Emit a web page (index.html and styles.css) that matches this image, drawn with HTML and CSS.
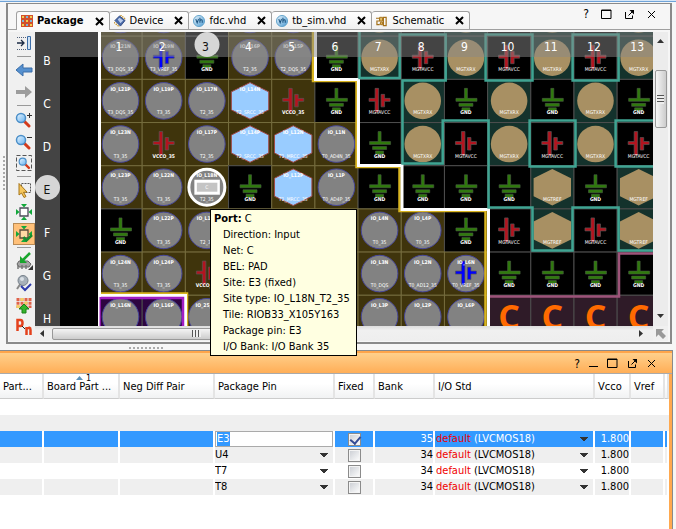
FILE: index.html
```html
<!DOCTYPE html>
<html lang="en">
<head>
<meta charset="utf-8">
<title>Package</title>
<link rel="stylesheet" href="styles.css">
</head>
<body>
<svg class="defs" aria-hidden="true">
  <defs>
    <linearGradient id="lens" x1="0" y1="0" x2="1" y2="1"><stop offset="0" stop-color="#eaf6ff"/><stop offset="1" stop-color="#62b0f0"/></linearGradient>
    <linearGradient id="ball" x1="0" y1="0" x2="1" y2="1"><stop offset="0" stop-color="#e8f4fb"/><stop offset="1" stop-color="#4d9bd3"/></linearGradient>
    <symbol id="i-mag" viewBox="0 0 18 18"><path d="M9 9l5 5" stroke="#d33a1c" stroke-width="3" stroke-linecap="round"/><circle cx="6" cy="6" r="4.500" fill="url(#lens)" stroke="#4a8ec8" stroke-width="1.500"/></symbol>
    <symbol id="i-close" viewBox="0 0 9 9"><path d="M1 1l7 7M8 1l-7 7" stroke="currentColor" stroke-width="2"/></symbol>
    <symbol id="i-thin" viewBox="0 0 9 9"><path d="M1 1l7 7M8 1l-7 7" stroke="currentColor"/></symbol>
    <symbol id="i-max" viewBox="0 0 11 11"><path d="M.5 1h9.500v8.500h-9.500zM0 1.500h10" fill="none" stroke="currentColor"/></symbol>
    <symbol id="i-pop" viewBox="0 0 11 11"><path d="M1.500 3v6.500h7v-3M4.500 6.500l4-4" fill="none" stroke="currentColor"/><path d="M5.500 1h4.500v4.500z" fill="currentColor"/></symbol>
    <symbol id="i-vh" viewBox="0 0 13 13"><circle cx="6.500" cy="6.500" r="6" fill="url(#ball)" stroke="#5c9fc9"/><path d="M3 4.500l1.500 4L6 4.500M7.500 3v5.500M7.500 6q2.500-2 2.500 .5v2" fill="none" stroke="#174f7c" stroke-width="1.100"/></symbol>
    <symbol id="i-place" viewBox="0 0 18 18"><path d="M5 5h8v8H5z" fill="#fff" stroke="#4c4c5a" stroke-width="1.300"/><path d="M6 1h6L9 4.500zM6 17h6l-3-3.500zM1 6v6l3.500-3zM17 6v6l-3.500-3z" fill="#12a83b"/></symbol>
    <symbol id="i-place-on" viewBox="0 0 18 18"><path d="M5 5h8v8H5z" fill="#ffd9a4" stroke="#5a4c3a" stroke-width="1.300"/><path d="M6 1h6L9 4.500zM6 17h6l-3-3.500zM1 6v6l3.500-3zM17 6v6l-3.500-3z" fill="#12a83b"/><path d="M8.500 12l3 3.500 5.500-5.500" fill="none" stroke="#168c2f" stroke-width="2.500"/></symbol>
  </defs>
</svg>

<main class="upper">
  <header class="tabbar">
    <nav class="tabs">
      <a class="tab active" href="#map"><svg width="12" height="12" viewBox="0 0 12 12"><path fill="#d2502b" d="M0 0h12v12H0z"/><path fill="#f4cd4d" d="M1 1h2v2H1zM9 1h2v2H9zM5 5h2v2H5zM1 9h2v2H1zM9 9h2v2H9z"/><path fill="#7db4d8" d="M5 1h2v2H5zM1 5h2v2H1zM9 5h2v2H9zM5 9h2v2H5z"/></svg><span>Package</span><svg class="x" width="9" height="9"><use href="#i-close"/></svg></a>
      <a class="tab" href="#device"><svg width="12" height="12" viewBox="0 0 13 13"><path d="M1 6l5-5 6 5-5 6z" fill="#4869a8" stroke="#2d477e"/><path d="M4 5l2-2 4 3-3 3z" fill="#b9cbe9"/><path d="M0 8l6 5M7 0l6 5" stroke="#c6952f" stroke-width="1.500" stroke-dasharray="1.500 1"/></svg><span>Device</span><svg class="x" width="9" height="9"><use href="#i-close"/></svg></a>
      <a class="tab" href="#fdc"><svg width="12" height="12"><use href="#i-vh"/></svg><span>fdc.vhd</span><svg class="x" width="9" height="9"><use href="#i-close"/></svg></a>
      <a class="tab" href="#tb"><svg width="12" height="12"><use href="#i-vh"/></svg><span>tb_sim.vhd</span><svg class="x" width="9" height="9"><use href="#i-close"/></svg></a>
      <a class="tab" href="#sch"><svg width="12" height="12" viewBox="0 0 13 12"><path d="M0 3h4v3H1v4h3M8 2h3v9H8zM4 4h4M4 9h4" fill="none" stroke="#a4711a" stroke-width="1.300"/><path d="M4 2h3v4H4zM5 7h2v3H5z" fill="#e7c36b" stroke="#a4711a"/></svg><span>Schematic</span><svg class="x" width="9" height="9"><use href="#i-close"/></svg></a>
    </nav>
    <div class="winbtns">
      <button aria-label="Help">?</button>
      <button aria-label="Maximize"><svg width="11" height="11"><use href="#i-max"/></svg></button>
      <button aria-label="Float"><svg width="11" height="11"><use href="#i-pop"/></svg></button>
      <button aria-label="Close"><svg width="9" height="9"><use href="#i-thin"/></svg></button>
    </div>
  </header>

  <section class="work">
    <div class="toolbar">
      <button aria-label="Dock"><svg width="18" height="18" viewBox="0 0 18 18"><path d="M2 3.500h10M2 15.500h10" stroke="#50607a" stroke-dasharray="1 1"/><path d="M2 9h6M6 6l3 3-3 3" fill="none" stroke="#1b2a44" stroke-width="1.300"/><path d="M12.500 2.500h3v13h-3z" fill="#cfe2f5" stroke="#3d6ea8"/></svg></button>
      <hr>
      <button aria-label="Back"><svg width="18" height="18" viewBox="0 0 18 18"><path d="M1 9l7-6v4h9v4H8v4z" fill="#5590cf" stroke="#3c6fa9"/></svg></button>
      <button aria-label="Forward"><svg width="18" height="18" viewBox="0 0 18 18"><path d="M17 9l-7-6v4H1v4h9v4z" fill="#9c9c9c"/></svg></button>
      <hr>
      <button aria-label="Zoom in"><svg width="18" height="18" viewBox="0 0 18 18"><use href="#i-mag" y="2" width="18" height="18"/><path d="M12 5.500h5M14.500 3v5" stroke="#333"/></svg></button>
      <button aria-label="Zoom out"><svg width="18" height="18" viewBox="0 0 18 18"><use href="#i-mag" y="2" width="18" height="18"/><path d="M12 5.500h5" stroke="#333"/></svg></button>
      <button aria-label="Zoom fit"><svg width="18" height="18" viewBox="0 0 18 18"><path d="M1.500 1.500h15v15h-15z" fill="none" stroke="#555" stroke-dasharray="4 2"/><use href="#i-mag" x="3" y="3" width="14" height="14"/></svg></button>
      <hr>
      <button aria-label="Select area"><svg width="18" height="18" viewBox="0 0 18 18"><path d="M6.500 2.500h9v9h-9z" fill="none" stroke="#555" stroke-dasharray="2 1"/><path d="M4 2.500l8 8.500-3.500 .3 2.500 4.200-2 1-2.500-4.500L4 14z" fill="#f5c65c" stroke="#a7761a"/></svg></button>
      <button aria-label="Place ports"><svg width="18" height="18"><use href="#i-place"/></svg></button>
      <button class="on" aria-label="Auto check"><svg width="18" height="18"><use href="#i-place-on"/></svg></button>
      <hr>
      <button aria-label="Import"><svg width="18" height="18" viewBox="0 0 18 18"><path d="M2 12l2-3h9l3 3-2 3H4z" fill="#a5a5a5" stroke="#666"/><path d="M3 13v4M7 13v4M11 13v4" stroke="#777" stroke-width="1.500"/><path d="M15 1L8 8" stroke="#18a52c" stroke-width="2.500"/><path d="M5 4v7h7z" fill="#18a52c"/><path d="M18 13v5h-5z" fill="#333"/></svg></button>
      <button aria-label="Validate"><svg width="18" height="18" viewBox="0 0 18 18"><path d="M6 9l-4 6" stroke="#888" stroke-width="2"/><circle cx="8" cy="6.500" r="5" fill="#a7b0b9" stroke="#76808a"/><circle cx="7" cy="5" r="2" fill="#d9dfe5"/><path d="M6 12l4 4 6-6" fill="none" stroke="#2d3bab" stroke-width="2"/></svg></button>
      <button aria-label="Assign pins"><svg width="18" height="18" viewBox="0 0 18 18"><path d="M3 2v10M7 2v10M11 2v10M15 2v10" stroke="#e0624a" stroke-width="3" stroke-dasharray="3 .7"/><path d="M5.500 3.500h3M9.500 7h3M1.500 10.500h3" stroke="#f3cf62" stroke-width="3"/><path d="M9 8l5 5h-3v4H7v-4H4z" fill="#35b52b" stroke="#1b7f19"/></svg></button>
      <button aria-label="Differential pairs"><svg width="18" height="18" viewBox="0 0 18 18"><path d="M2.500 13V2h3q2 0 2 3t-2 3H3M11.500 17V9M11.500 11q4-3 4 1v5" fill="none" stroke="#e3411d" stroke-width="2.500"/><path d="M7 8l3 3" stroke="#222"/></svg></button>
    </div>
    <div class="canvas">
      <svg class="map" id="map" role="img" aria-label="Package pins"></svg>
      <div class="vbar"><i class="up"></i><i class="thumb"></i><i class="down"></i></div>
      <div class="hbar"><i class="left"></i><i class="thumb"></i><i class="right"></i></div>
      <div class="corner"><svg width="10" height="10" viewBox="0 0 10 10"><path d="M0 0h8L5.500 2.500 10 7 7 10 2.500 5.500 0 8z" fill="#999"/></svg></div>
    </div>
  </section>

  <div class="tip" role="tooltip">
    <p><b>Port:</b> C</p>
    <ul>
      <li>Direction: Input</li><li>Net: C</li><li>BEL: PAD</li><li>Site: E3 (fixed)</li><li>Site type: IO_L18N_T2_35</li><li>Tile: RIOB33_X105Y163</li><li>Package pin: E3</li><li>I/O Bank: I/O Bank 35</li>
    </ul>
  </div>
</main>
<div class="splitter"></div>
<i class="side-grip"></i>

<section class="lower">
  <header class="titlebar">
    <div class="winbtns">
      <button aria-label="Help">?</button>
      <button aria-label="Minimize"><svg width="9" height="9" viewBox="0 0 9 9"><path d="M0 7.500h9" stroke="currentColor"/></svg></button>
      <button aria-label="Maximize"><svg width="11" height="11"><use href="#i-max"/></svg></button>
      <button aria-label="Float"><svg width="11" height="11"><use href="#i-pop"/></svg></button>
      <button aria-label="Close"><svg width="9" height="9"><use href="#i-thin"/></svg></button>
    </div>
  </header>
  <table class="ports">
    <colgroup><col class="w-part"><col class="w-board"><col class="w-neg"><col class="w-pin"><col class="w-fixed"><col class="w-bank"><col class="w-std"><col class="w-vcco"><col class="w-vref"><col></colgroup>
    <thead>
      <tr><th>Part...</th><th><span class="sort">1</span>Board Part ...</th><th>Neg Diff Pair</th><th>Package Pin</th><th>Fixed</th><th>Bank</th><th>I/O Std</th><th>Vcco</th><th>Vref</th><th></th></tr>
    </thead>
    <tbody>
      <tr class="blank"><td colspan="10"></td></tr>
      <tr class="blank alt"><td colspan="10"></td></tr>
      <tr class="sel"><td></td><td></td><td></td><td><input id="pin" class="pin" type="text" value="E3" aria-label="Package pin"></td><td class="c"><input type="checkbox" aria-label="Fixed" checked></td><td class="r">35</td><td><button class="std"><em>default</em> (LVCMOS18)</button></td><td class="r">1.800</td><td></td><td></td></tr>
      <tr class="alt"><td></td><td></td><td></td><td><select aria-label="Package pin"><option>U4</option></select></td><td class="c"><input type="checkbox" aria-label="Fixed"></td><td class="r">34</td><td><button class="std"><em>default</em> (LVCMOS18)</button></td><td class="r">1.800</td><td></td><td></td></tr>
      <tr><td></td><td></td><td></td><td><select aria-label="Package pin"><option>T7</option></select></td><td class="c"><input type="checkbox" aria-label="Fixed"></td><td class="r">34</td><td><button class="std"><em>default</em> (LVCMOS18)</button></td><td class="r">1.800</td><td></td><td></td></tr>
      <tr class="alt"><td></td><td></td><td></td><td><select aria-label="Package pin"><option>T8</option></select></td><td class="c"><input type="checkbox" aria-label="Fixed"></td><td class="r">34</td><td><button class="std"><em>default</em> (LVCMOS18)</button></td><td class="r">1.800</td><td></td><td></td></tr>
    </tbody>
  </table>
</section>
<script src="map.js"></script>
</body>
</html>
```

FILE: styles.css
```css
* { box-sizing: border-box; }
body {
  margin: 0;
  height: 100vh;
  display: flex;
  flex-direction: column;
  position: relative;
  overflow: hidden;
  background: #f6f6f6;
  border-top: 1px solid #d6e6f6;
  color: #000;
  font: 11px/16px "DejaVu Sans Condensed", "DejaVu Sans", sans-serif;
}
body::before { content: ""; height: 1px; background: #6fa3d8; flex: none; }
button {
  font: inherit;
  color: inherit;
  border: 0;
  padding: 0;
  background: none;
}
svg { display: block; flex: none; }
.defs { position: absolute; width: 0; height: 0; }

.upper {
  position: relative;
  flex: 1;
  min-height: 0;
  display: flex;
  flex-direction: column;
  margin: 1px 4px 0 6px;
  border: 2px solid #8a8a8a;
  border-top-width: 1px;
}
.tabbar {
  display: flex;
  justify-content: space-between;
  flex: none;
  height: 26px;
  padding: 7px 14px 0 8px;
  border-bottom: 1px solid #a0a0a0;
}
.tabs { display: flex; }
.tab {
  display: flex;
  align-items: center;
  gap: 4px;
  height: 18px;
  padding: 0 5px 0 4px;
  border: 1px solid #a0a0a0;
  border-bottom: 0;
  border-left: 0;
  border-radius: 3px 3px 0 0;
  background: linear-gradient(#fff, #f0f0f0);
  color: #000;
  text-decoration: none;
}
.tab.active {
  height: 19px;
  border-left: 1px solid #a0a0a0;
  background: #fafafa;
  font-weight: bold;
}
.tab .x { margin-left: 7px; }
.winbtns { display: flex; align-items: center; gap: 12px; font-size: 12px; }
.tabbar .winbtns { padding-bottom: 12px; }

.work { flex: 1; min-height: 0; display: flex; margin: 2px 2px 1px 1px; }
.toolbar {
  display: flex;
  flex-direction: column;
  align-items: center;
  width: 26px;
  padding-left: 4px;
  background: #f0f0f0;
}
.toolbar button {
  display: grid;
  place-items: center;
  width: 22px;
  height: 22px;
  flex: none;
}
.toolbar hr { width: 14px; margin: 2px 0; border: 0; border-top: 1px solid #999; }
.toolbar .on { border: 1px solid #b98b55; background: #ffc079; }

.canvas {
  flex: 1;
  min-width: 0;
  display: grid;
  grid-template-columns: 1fr 15px;
  grid-template-rows: 1fr 15px;
}
.map { width: 100%; height: 100%; background: #000; overflow: hidden; }
.map text { text-anchor: middle; font-family: "DejaVu Sans Condensed", "DejaVu Sans", sans-serif; }
.map .pin-label { font-size: 5px; fill: #fff; }
.map .name-label { font-size: 5px; font-weight: bold; fill: #fff; }
.map .axis { font-size: 12px; fill: #fff; }
.map .axis.hot { fill: #111; }
.map .big { font: bold 34px "Open Sans", sans-serif; fill: #ff6a00; }

.vbar, .hbar { display: flex; align-items: center; background: #ececec; }
.vbar { flex-direction: column; padding: 7px 0 8px; }
.hbar { padding: 0 10px 0 5px; background: linear-gradient(#ddd, #f0f0f0 30%, #eee); }
.vbar i, .hbar i { flex: none; }
.up, .down { width: 7px; height: 4px; background: #333; clip-path: polygon(50% 0, 100% 100%, 0 100%); }
.down { margin-top: auto; clip-path: polygon(0 0, 100% 0, 50% 100%); }
.left, .right { width: 4px; height: 7px; background: #333; clip-path: polygon(0 50%, 100% 0, 100% 100%); }
.right { margin-left: auto; clip-path: polygon(0 0, 100% 50%, 0 100%); }
.thumb { border: 1px solid #999; border-radius: 2px; }
.vbar .thumb {
  width: 12px;
  height: 58px;
  margin-top: 27px;
  background: repeating-linear-gradient(#555 0 1px, #eee 1px 3px) center / 7px 9px no-repeat, linear-gradient(90deg, #f6f6f6, #ccc);
}
.hbar .thumb {
  width: 48%;
  height: 12px;
  margin-left: 8px;
  background: repeating-linear-gradient(90deg, #555 0 1px, #eee 1px 3px) center / 9px 7px no-repeat, linear-gradient(#f4f4f4, #ccc);
}
.corner { display: grid; place-items: center; background: #f0f0f0; }

.tip {
  position: absolute;
  left: 202px;
  top: 205px;
  z-index: 2;
  padding: 1px 6px 0 3px;
  border: 1px solid #000;
  background: #ffffe1;
  white-space: nowrap;
}
.tip p, .tip ul { margin: 0; }
.tip ul { padding: 0 0 0 9px; list-style: none; }

.splitter {
  flex: none;
  height: 6px;
  margin-left: 129px;
  background: repeating-linear-gradient(90deg, #aaa 0 2px, transparent 2px 4px) 0 3px / 35px 2px no-repeat;
}
.side-grip {
  position: absolute;
  left: 3px;
  top: 155px;
  width: 2px;
  height: 35px;
  background: repeating-linear-gradient(#aaa 0 2px, transparent 2px 4px);
}

.lower {
  flex: none;
  height: 179px;
  margin-right: 3px;
  border-top: 1px solid #8a8a8a;
  border-right: 1px solid #8a8a8a;
  background: #fff;
  box-shadow: inset -3px 0 #ffa94f;
  padding-right: 3px;
}
.titlebar {
  display: flex;
  justify-content: flex-end;
  height: 23px;
  margin-right: -3px;
  padding: 3px 16px 0 0;
  border-top: 2px solid #ffa54a;
  background: linear-gradient(#ffd08c, #ffae57);
  border-bottom: 1px solid #aaa;
}
.titlebar .winbtns { gap: 9px; padding-bottom: 2px; }
.ports { width: 100%; table-layout: fixed; border-collapse: separate; border-spacing: 0; }
.w-part { width: 44px; }
.w-board { width: 76px; }
.w-neg { width: 95px; }
.w-pin { width: 120px; }
.w-fixed { width: 40px; }
.w-bank { width: 60px; }
.w-std { width: 160px; }
.w-vcco { width: 36px; }
.w-vref { width: 34px; }
.ports th {
  position: relative;
  height: 25px;
  padding: 2px 0 0 3px;
  border-right: 2px solid #e4e4e4;
  border-bottom: 1px solid #ccc;
  background: linear-gradient(#fff 40%, #f1f2f3);
  font-weight: normal;
  text-align: left;
  white-space: nowrap;
}
.sort { position: absolute; left: 32px; top: -2px; padding-left: 10px; font-size: 9px; line-height: 12px; }
.sort::before {
  content: "";
  position: absolute;
  left: 0;
  top: 4px;
  width: 7px;
  height: 4px;
  background: #5e93b8;
  clip-path: polygon(50% 0, 100% 100%, 0 100%);
}
.ports td { height: 16px; padding: 0; border-right: 2px solid #fff; line-height: 16px; white-space: nowrap; }
.ports .blank td { border: 0; }
.alt { background: #efefef; }
.sel { background: #3399ff; color: #fff; }
.ports .r { text-align: right; }
.ports .c { text-align: center; }
.ports input, .ports select, .std { display: block; width: 100%; height: 16px; margin: 0; font: inherit; border: 0; border-radius: 0; }
.ports .pin { padding: 0 1px; border: 1px solid #aaa; background: #fff; color: #000; outline: 0; }
.pin::selection { background: #3399ff; color: #fff; }
.ports select, .std {
  appearance: none;
  padding: 0;
  text-align: left;
  color: inherit;
  background: conic-gradient(from -45deg at 50% 100%, #333 90deg, transparent 0) right 5px center / 8px 4px no-repeat;
}
.std { padding-left: 1px; }
.std em { font-style: normal; color: #f00000; }
.ports input[type="checkbox"] {
  appearance: none;
  width: 13px;
  height: 13px;
  margin: 1px auto;
  border: 1px solid #8b8b8b;
  background: linear-gradient(135deg, #c9ccd2, #fff);
  box-shadow: inset 0 0 0 1px #f4f4f4;
}
.ports input[type="checkbox"]:checked::after {
  content: "";
  display: block;
  width: 5px;
  height: 8px;
  margin: 0 0 0 3px;
  border: solid #364c94;
  border-width: 0 2px 2px 0;
  transform: rotate(40deg);
}
```

FILE: map.js
```js
// Package view: one character per pin, rows A to H.
// g I/O, U VREF, G ground, V bank supply, v transceiver supply, H clock I/O,
// T and X transceiver pins, S selected pin, P I/O of the next bank, C config
const rows = [
  'ggGggGTvTvTvT',
  'gUGggGTvTvTvT',
  'gggHVGvTGTGTG',
  'gVgHHgGTvTvTv',
  'ggSGHgGGGGXGX',
  'GgggggggGvXvX',
  'ggVgggggUGGGG',
  'PPgggggggCCCC'
];
const names = {
  B1: 'IO_L21N T3_DQS_35', B2: 'IO_L19N T3_VREF_35', B4: 'IO_L16P T2_35', B5: 'IO_L15P T2_DQS_35',
  C1: 'IO_L21P T3_DQS_35', C2: 'IO_L19P T3_35', C3: 'IO_L17N T2_35', C4: 'IO_L14N T2_SRCC_35',
  D1: 'IO_L23N T3_35', D3: 'IO_L17P T2_35', D4: 'IO_L14P T2_SRCC_35', D5: 'IO_L12N T1_MRCC_35', D6: 'IO_L1N T0_AD4N_35',
  E1: 'IO_L23P T3_35', E2: 'IO_L22N T3_35', E3: 'IO_L18N T2_35', E5: 'IO_L12P T1_MRCC_35', E6: 'IO_L1P T0_AD4P_35',
  F2: 'IO_L22P T3_35', F3: 'IO_L18P T2_35', F7: 'IO_L4N T0_35', F8: 'IO_L4P T0_35',
  G1: 'IO_L24N T3_35', G2: 'IO_L24P T3_35', G7: 'IO_L3N T0_DQS', G8: 'IO_L2N T0_AD12_35', G9: 'IO_L6N T0_VREF_35',
  H1: 'IO_L16N', H2: 'IO_L16P', H3: 'IO_25_35', H7: 'IO_L3P', H8: 'IO_L2P', H9: 'IO_L6P'
};
const pitch = 43.18;
const ground = { G: '#000', v: '#000', T: '#14322c', X: '#14322c', C: '#2f1b28', P: '#2d0540' };
const hexagon = '0,-18.300 18.700,-9 18.700,9 0,18.300 -18.700,9 -18.700,-9';
const label = (y, s, c = 'pin-label') => s ? `<text class="${c}" y="${y}">${s}</text>` : '';
const supply = color => `<path d="M-10.500-2.500h6v-10h3.500v24h-3.500v-11h-6zM1.500-6.500h3.500v4h5.500v3h-5.500v5.500h-3.500z" fill="${color}" stroke="#565656" stroke-width=".7"/>`;
const disc = '<circle r="18.300" fill="#828282" stroke="#47479a"/>';

function symbol(kind, name) {
  const [top = '', bottom = ''] = (name || '').split(' ');
  const text = label(-10, top, 'name-label') + label(13.5, bottom);
  switch (kind) {
    case 'G': return '<path d="M-1.500-12.500h3v10h9.500v3h-21v-3h8.500zM-7 2.500h14v3h-14zM-4 7h8v3h-8z" fill="#2f7a0c" stroke="#4a5a44" stroke-width=".6"/>' + label(13.5, 'GND', 'name-label');
    case 'V': return supply('#b3141f') + label(13.5, 'VCCO_35', 'name-label');
    case 'v': return supply('#b3141f') + label(13.5, 'MGTAVCC');
    case 'U': return disc + supply('#0000ff') + text;
    case 'H': return `<polygon points="${hexagon}" fill="#99ccff" stroke="#a04a48"/>` + text;
    case 'T': return '<circle r="18.300" fill="#a89063"/>' + label(13.5, 'MGTXRX');
    case 'X': return `<polygon points="${hexagon}" fill="#a89063"/>` + label(13.5, 'MGTREF');
    case 'C': return label(12, 'C', 'big');
    case 'S': return '<circle r="18" fill="#828282" stroke="#fff" stroke-width="3"/>' + text +
      '<path d="M-12.500-7.500h25.500v15h-25.500z" fill="#fff"/><path d="M-10-4.500h20.500v9h-20.500z" fill="#c4c4c4"/>' + label(2, 'C');
    default: return disc + text;
  }
}

let out = '<g transform="translate(-35 -32)">';
rows.forEach((row, r) => [...row].forEach((kind, c) => {
  const x = 99 + c * pitch, y = -7 + r * pitch;
  const bg = ground[kind] || '#3f340c';
  out += `<rect x="${x}" y="${y}" width="${pitch}" height="${pitch}" fill="${bg}" stroke="${bg === '#3f340c' ? '#756c3e' : '#4e4e4e'}"/>`;
}));
rows.forEach((row, r) => [...row].forEach((kind, c) => {
  // Only the lower rims of the row A discs reach into view
  if (r === 0 && 'GvV'.includes(kind)) return;
  const x = 120.5 + c * pitch, y = 14.5 + r * pitch;
  const art = symbol(kind, names['ABCDEFGH'[r] + (c + 1)]);
  out += `<g transform="translate(${x} ${y})">${r ? art : art.replace(/<text.*<\/text>/, '')}</g>`;
}));

// Bank outlines
const line = (color, width, d) => `<path d="${d}" fill="none" stroke="${color}" stroke-width="${width}"/>`;
out += line('#d9b521', 2.5, 'M313 32V81H356.500V167H399.500V211H485.500V330M98 293.500H187V330');
out += line('#fff', 3, 'M315.500 32V79.500H358.500V165.500H402V209.500H488.500V330M98 295.500H185.500V330');
out += line('#a21dc4', 2.5, 'M99.500 330V298H183V330');
out += line('#3fa492', 2.5, 'M359.500 30V78H399.700V34.500H445.700V80.500H402.500V163.500H442.700V120.500H488.600V207.500H532.500V250.500H572.500V207.500H618.600V250.500H660M485.600 34.500H532.500V80.500H485.600zM572.600 34.500H618.600V80.500H572.600zM529.600 120.500H575.500V166.500H529.600zM660 120.500H615.600V166.500H660');
out += line('#9d5379', 2.5, 'M490 296.500H619V253.500H660');

// Rulers
out += '<path d="M35 32h63v300h-63z" fill="#000"/><path d="M98 32h3v265h-1.500v35h-1.500z" fill="#fff"/>';
out += '<path d="M35 32h63v25h-38v300h-25z" fill="#444"/><path d="M101 32h600v25h-600z" fill="#888" opacity=".5"/>';
out += '<circle cx="207" cy="44.500" r="12.500" fill="#d6d6d6"/><circle cx="47.500" cy="187.500" r="12.500" fill="#d6d6d6"/>';
for (let c = 1; c <= 13; c++) out += `<text class="axis${c === 3 ? ' hot' : ''}" x="${119 + (c - 1) * pitch}" y="51">${c}</text>`;
[...'BCDEFGH'].forEach((s, r) => {
  out += `<text class="axis${s === 'E' ? ' hot' : ''}" x="47" y="${64.5 + r * 43}">${s}</text>`;
});
document.getElementById('map').innerHTML = out + '</g>';

const pin = document.getElementById('pin');
pin.focus();
pin.select();
```
